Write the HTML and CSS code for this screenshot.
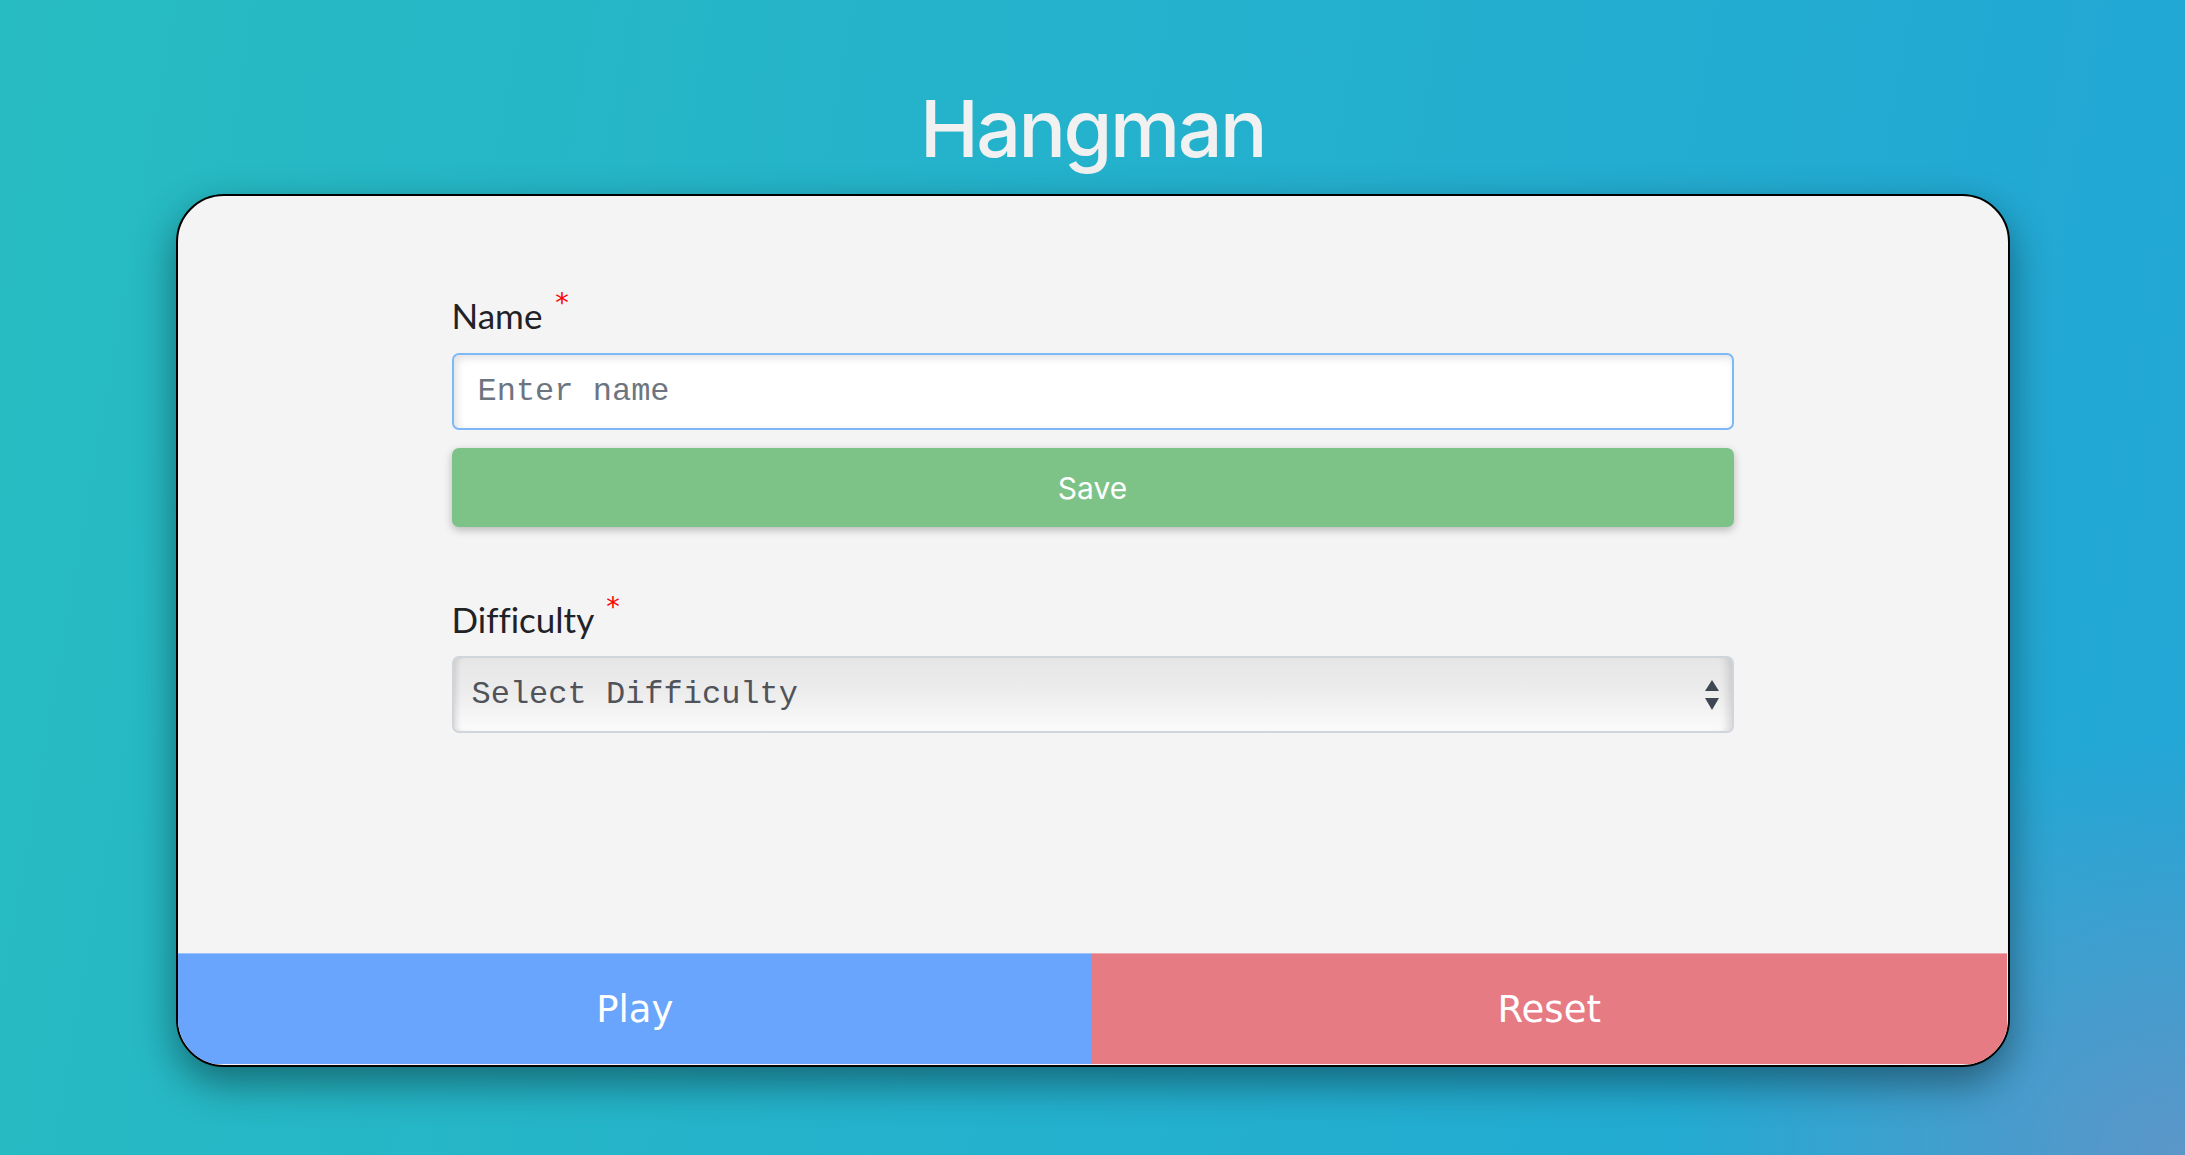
FILE: index.html
```html
<!DOCTYPE html>
<html lang="en">
<head>
<meta charset="utf-8">
<title>Hangman</title>
<link rel="stylesheet" href="styles.css">
</head>
<body>
<main class="page">
  <h1 class="title">Hangman</h1>
  <section class="card">
    <form class="form">
      <label class="label" for="name">Name <span class="req">*</span></label>
      <input class="input" id="name" type="text" placeholder="Enter name" autofocus>
      <button class="save" type="button">Save</button>

      <label class="label label-diff" for="difficulty">Difficulty <span class="req">*</span></label>
      <div class="select-wrap">
        <select class="select" id="difficulty">
          <option>Select Difficulty</option>
          <option>Easy</option>
          <option>Medium</option>
          <option>Hard</option>
        </select>
        <svg class="arrows" width="14" height="30" viewBox="0 0 14 30" aria-hidden="true">
          <path d="M7 0 L14 11 L0 11 Z" fill="#3e4753"/>
          <path d="M0 18 L14 18 L7 30 Z" fill="#3e4753"/>
        </svg>
      </div>
    </form>
    <div class="footer">
      <button class="btn play" type="button">Play</button>
      <button class="btn reset" type="button">Reset</button>
    </div>
  </section>
</main>
</body>
</html>
```
FILE: styles.css
```css
html, body {
  margin: 0;
  padding: 0;
  height: 100%;
}

body {
  overflow: hidden;
  background:
    radial-gradient(ellipse 520px 420px at 100% 100%, rgba(92, 150, 200, 1) 0%, rgba(92, 150, 200, 0) 100%),
    linear-gradient(100deg, #27bcc1 0%, #24b2cc 45%, #22a6d6 100%);
  font-family: "Lato", "Noto Sans", sans-serif;
}

.page {
  display: flex;
  flex-direction: column;
  align-items: center;
  padding-top: 78px;
}

.title {
  margin: 0;
  font-family: "Inter", "Roboto", sans-serif;
  font-weight: 500;
  font-size: 79px;
  line-height: 100px;
  letter-spacing: -2.5px;
  color: #f1f1f1;
}

.card {
  margin-top: 16px;
  box-sizing: border-box;
  width: 1834px;
  height: 873px;
  background: #f4f4f4;
  border: 2px solid #000;
  border-radius: 48px;
  overflow: hidden;
  display: flex;
  flex-direction: column;
  box-shadow: 0 16px 40px rgba(0, 0, 0, 0.42);
}

.form {
  flex: 1;
  width: 1282px;
  margin: 0 auto;
  padding-top: 99px;
  display: flex;
  flex-direction: column;
}

.label {
  display: block;
  font-family: "Lato", sans-serif;
  font-size: 35px;
  line-height: 41px;
  color: #1f2226;
  margin-bottom: 17px;
  font-variant-ligatures: none;
  font-feature-settings: "liga" 0;
}

.label-diff {
  margin-top: 72px;
  margin-bottom: 16px;
}

.req {
  color: #ff0000;
  font-family: "DejaVu Sans", sans-serif;
  font-size: 27px;
  line-height: 27px;
  vertical-align: top;
  position: relative;
  top: -6px;
  margin-left: 4px;
}

.input {
  box-sizing: border-box;
  height: 77px;
  width: 100%;
  margin: 0;
  padding: 0 24px;
  border: 2px solid #7db8f7;
  border-radius: 7px;
  background: #fff;
  box-shadow: inset 3px 3px 9px rgba(0, 0, 0, 0.12);
  font-family: "Liberation Mono", "Courier New", monospace;
  font-size: 32px;
  color: #333;
  outline: none;
  caret-color: #000;
}

.input::placeholder {
  color: #6d7580;
}

.save {
  margin-top: 18px;
  height: 79px;
  width: 100%;
  border: none;
  border-radius: 7px;
  background: #7dc387;
  color: #fff;
  font-family: "Inter", "Roboto", sans-serif;
  font-size: 30px;
  box-shadow: 0 3px 8px rgba(0, 0, 0, 0.25);
  cursor: pointer;
}

.select-wrap {
  position: relative;
  height: 77px;
}

.select {
  -webkit-appearance: none;
  appearance: none;
  box-sizing: border-box;
  width: 100%;
  height: 77px;
  margin: 0;
  padding: 0 18px 0 18px;
  border: 2px solid #d0d5dc;
  border-radius: 7px;
  background: linear-gradient(to bottom, #e6e6e6 0%, #ececec 45%, #fbfbfb 100%);
  box-shadow: inset 7px 0 6px -5px rgba(0, 0, 0, 0.14), inset -10px 0 8px -6px rgba(0, 0, 0, 0.14);
  font-family: "Liberation Mono", "Courier New", monospace;
  font-size: 32px;
  color: #50545a;
  outline: none;
}

.arrows {
  position: absolute;
  right: 15px;
  top: 24px;
  pointer-events: none;
}

.footer {
  display: flex;
  height: 111px;
  margin: 0 1px 1px 0;
}

.btn {
  flex: 1;
  border: none;
  border-top: 1px solid rgba(255, 255, 255, 0.35);
  margin: 0;
  color: #fff;
  font-family: "DejaVu Sans", sans-serif;
  font-size: 37px;
  cursor: pointer;
}

.play {
  background: #69a5fd;
}

.reset {
  background: #e77b84;
}
```
